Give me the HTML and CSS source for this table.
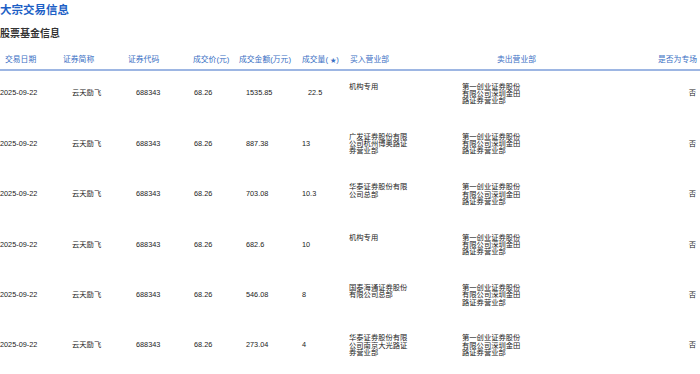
FILE: index.html
```html
<!DOCTYPE html>
<html lang="zh-CN">
<head>
    <meta charset="UTF-8">
    <meta name="viewport" content="width=device-width, initial-scale=1.0">
    <title>大宗交易信息</title>
    <link rel="stylesheet" href="styles.css">
</head>
<body>
    <h1 class="title">大宗交易信息</h1>
    <h2 class="subtitle">股票基金信息</h2>

    <table class="trades">
        <colgroup>
            <col class="c-date">
            <col class="c-name">
            <col class="c-code">
            <col class="c-price">
            <col class="c-amount">
            <col class="c-volume">
            <col class="c-buyer">
            <col class="c-seller">
            <col class="c-special">
        </colgroup>
        <thead>
            <tr>
                <th>交易日期</th>
                <th>证券简称</th>
                <th>证券代码</th>
                <th>成交价(元)</th>
                <th>成交金额(万元)</th>
                <th>成交量( <span class="star">★</span>)</th>
                <th>买入营业部</th>
                <th>卖出营业部</th>
                <th>是否为专场</th>
            </tr>
        </thead>
        <tbody>
            <tr>
                <td>2025-09-22</td>
                <td>云天励飞</td>
                <td>688343</td>
                <td>68.26</td>
                <td>1535.85</td>
                <td><span class="vol">22.5</span></td>
                <td class="buyer"><div class="dept">机构专用</div></td>
                <td><div class="dept">第一创业证券股份有限公司深圳金田路证券营业部</div></td>
                <td>否</td>
            </tr>
            <tr>
                <td>2025-09-22</td>
                <td>云天励飞</td>
                <td>688343</td>
                <td>68.26</td>
                <td>887.38</td>
                <td>13</td>
                <td class="buyer"><div class="dept">广发证券股份有限公司杭州博奥路证券营业部</div></td>
                <td><div class="dept">第一创业证券股份有限公司深圳金田路证券营业部</div></td>
                <td>否</td>
            </tr>
            <tr>
                <td>2025-09-22</td>
                <td>云天励飞</td>
                <td>688343</td>
                <td>68.26</td>
                <td>703.08</td>
                <td>10.3</td>
                <td class="buyer"><div class="dept">华泰证券股份有限公司总部</div></td>
                <td><div class="dept">第一创业证券股份有限公司深圳金田路证券营业部</div></td>
                <td>否</td>
            </tr>
            <tr>
                <td>2025-09-22</td>
                <td>云天励飞</td>
                <td>688343</td>
                <td>68.26</td>
                <td>682.6</td>
                <td>10</td>
                <td class="buyer"><div class="dept">机构专用</div></td>
                <td><div class="dept">第一创业证券股份有限公司深圳金田路证券营业部</div></td>
                <td>否</td>
            </tr>
            <tr>
                <td>2025-09-22</td>
                <td>云天励飞</td>
                <td>688343</td>
                <td>68.26</td>
                <td>546.08</td>
                <td>8</td>
                <td class="buyer"><div class="dept">国泰海通证券股份有限公司总部</div></td>
                <td><div class="dept">第一创业证券股份有限公司深圳金田路证券营业部</div></td>
                <td>否</td>
            </tr>
            <tr>
                <td>2025-09-22</td>
                <td>云天励飞</td>
                <td>688343</td>
                <td>68.26</td>
                <td>273.04</td>
                <td>4</td>
                <td class="buyer"><div class="dept">华泰证券股份有限公司南京大光路证券营业部</div></td>
                <td><div class="dept">第一创业证券股份有限公司深圳金田路证券营业部</div></td>
                <td>否</td>
            </tr>
        </tbody>
    </table>
</body>
</html>
```

FILE: styles.css
```css
body {
    font-family: "Liberation Sans", "Noto Sans CJK SC", sans-serif;
    color: #222;
    background: #fff;
    margin: 0;
    padding: 0;
}

.title {
    margin: 0;
    font-size: 11.5px;
    line-height: 20px;
    font-weight: bold;
    color: #1d5fc6;
}

.subtitle {
    margin: 7px 0 0;
    font-size: 10px;
    line-height: 14px;
    font-weight: bold;
    color: #333;
}

.trades {
    width: 700px;
    margin-top: 9px;
    border-collapse: collapse;
    table-layout: fixed;
}

.c-date { width: 60px; }
.c-name { width: 65px; }
.c-code { width: 65px; }
.c-price { width: 47px; }
.c-amount { width: 60px; }
.c-volume { width: 49px; }
.c-buyer { width: 112px; }
.c-seller { width: 162px; }
.c-special { width: 80px; }

.trades th {
    font-size: 7.8px;
    line-height: 10px;
    font-weight: normal;
    color: #3a6fc4;
    text-align: left;
    white-space: nowrap;
    padding: 5px 0 4px;
    border-bottom: 2px solid #9db6e3;
}

.star {
    font-size: 6px;
}

.trades th:nth-child(1) { padding-left: 5px; }
.trades th:nth-child(2) { padding-left: 3px; }
.trades th:nth-child(3) { padding-left: 3px; }
.trades th:nth-child(4) { padding-left: 3px; }
.trades th:nth-child(5) { padding-left: 2px; }
.trades th:nth-child(6) { padding-left: 5px; }
.trades th:nth-child(7) { padding-left: 4px; }
.trades th:nth-child(8) { padding-left: 39px; }
.trades th:nth-child(9) { text-align: right; padding-right: 3px; }

.trades td {
    font-size: 7.3px;
    line-height: 10px;
    text-align: left;
    vertical-align: middle;
    white-space: nowrap;
    padding: 11.5px 0 17px;
}

.trades td:nth-child(1) { padding-left: 0; }
.trades td:nth-child(2) { padding-left: 12px; }
.trades td:nth-child(3) { padding-left: 11px; }
.trades td:nth-child(4) { padding-left: 4px; }
.trades td:nth-child(5) { padding-left: 9px; }
.trades td:nth-child(6) { padding-left: 5px; }
.trades td:nth-child(7) { padding-left: 3px; }
.trades td:nth-child(8) { padding-left: 4px; }
.trades td:nth-child(9) { text-align: right; padding-right: 4px; }

.trades td.buyer {
    vertical-align: top;
}

.vol {
    padding-left: 6px;
}

.dept {
    width: 60px;
    white-space: normal;
    line-height: 7.3px;
    font-family: "Noto Sans CJK SC", sans-serif;
}
```
